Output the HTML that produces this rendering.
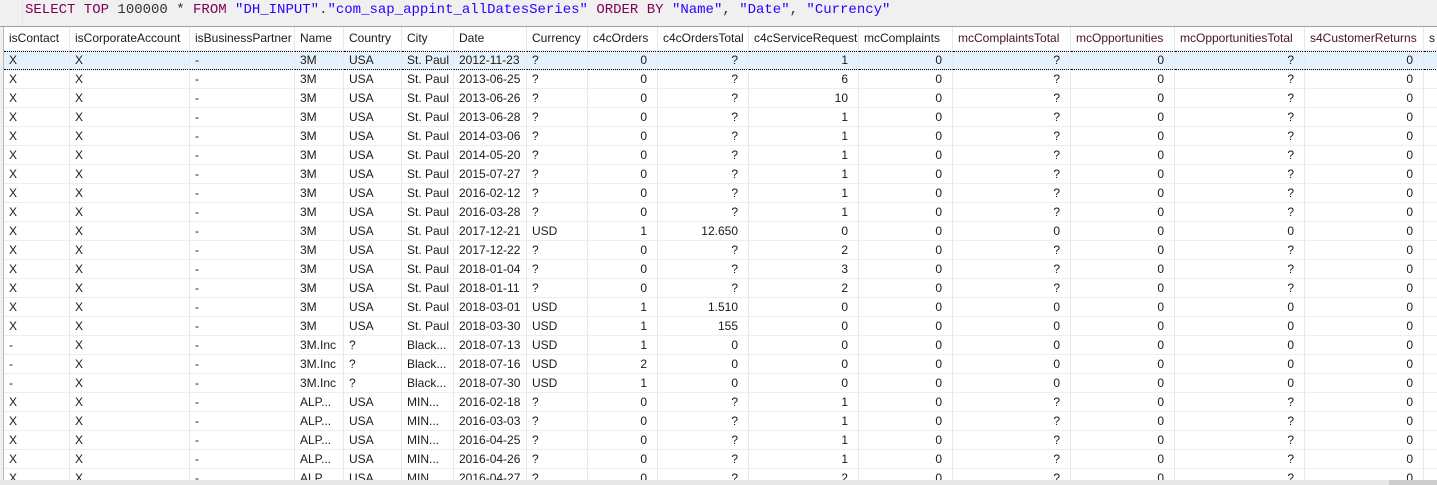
<!DOCTYPE html>
<html><head><meta charset="utf-8"><style>
body{margin:0;width:1437px;height:485px;overflow:hidden;background:#f0f0f0;font-family:"Liberation Sans",sans-serif;}
#sql{position:absolute;left:0;top:0;width:1437px;height:26px;background:#f0f0f0;border-bottom:1px solid #a0a0a0;}
#sql .g{position:absolute;left:22px;top:0;width:1px;height:26px;background:#e4e4e4;}
#sql .t{position:absolute;left:25px;top:2px;font:14px "Liberation Mono",monospace;color:#333;white-space:pre;}
.k{color:#7f0055}.s{color:#2a00ff}
#grid{position:absolute;left:3px;top:27px;width:1433px;height:453px;background:#fff;border-left:1px solid #b8b8b8;overflow:hidden;font-size:12px;color:#1a1a1a;}
.r{display:flex;height:19px;}
.r>div{box-sizing:border-box;height:19px;line-height:18px;padding:0 5px;border-right:1px solid #e6e9ee;border-bottom:1px solid #eceef2;white-space:nowrap;overflow:hidden;flex:none;}
.h,.h>div{height:24px!important;line-height:23px!important}
.m{color:#4a0f2a}
.n{text-align:right;padding-right:10px!important}
.sel>div{background:#e5f1fb;border-top:1px dotted #000;border-bottom:1px dotted #000!important;line-height:16px!important}
.r>div:nth-child(1){width:66px}.r>div:nth-child(2){width:120px}.r>div:nth-child(3){width:105px}.r>div:nth-child(4){width:49px}
.r>div:nth-child(5){width:58px}.r>div:nth-child(6){width:52px}.r>div:nth-child(7){width:73px}.r>div:nth-child(8){width:61px}
.r>div:nth-child(9){width:70px}.r>div:nth-child(10){width:91px}.r>div:nth-child(11){width:110px}.r>div:nth-child(12){width:94px}
.r>div:nth-child(13){width:118px}.r>div:nth-child(14){width:104px}.r>div:nth-child(15){width:130px}.r>div:nth-child(16){width:119px}.r>div:nth-child(17){width:20px}
.r>div:nth-child(n+9):nth-child(-n+16){text-align:right;padding-right:10px}
.h>div:nth-child(n+9){text-align:left!important;padding-right:5px!important}
</style></head><body>
<div id="sql"><div class="g"></div><div class="t"><span class="k">SELECT TOP</span> 100000 * <span class="k">FROM</span> <span class="s">"DH_INPUT"</span>.<span class="s">"com_sap_appint_allDatesSeries"</span> <span class="k">ORDER BY</span> <span class="s">"Name"</span>, <span class="s">"Date"</span>, <span class="s">"Currency"</span></div></div>
<div id="grid">
<div class="r h"><div>isContact</div><div>isCorporateAccount</div><div>isBusinessPartner</div><div>Name</div><div>Country</div><div>City</div><div>Date</div><div>Currency</div><div>c4cOrders</div><div>c4cOrdersTotal</div><div>c4cServiceRequest</div><div>mcComplaints</div><div class="m">mcComplaintsTotal</div><div class="m">mcOpportunities</div><div class="m">mcOpportunitiesTotal</div><div class="m">s4CustomerReturns</div><div>s</div></div>
<div class="r sel"><div>X</div><div>X</div><div>-</div><div>3M</div><div>USA</div><div>St. Paul</div><div>2012-11-23</div><div>?</div><div>0</div><div>?</div><div>1</div><div>0</div><div>?</div><div>0</div><div>?</div><div>0</div><div></div></div>
<div class="r"><div>X</div><div>X</div><div>-</div><div>3M</div><div>USA</div><div>St. Paul</div><div>2013-06-25</div><div>?</div><div>0</div><div>?</div><div>6</div><div>0</div><div>?</div><div>0</div><div>?</div><div>0</div><div></div></div>
<div class="r"><div>X</div><div>X</div><div>-</div><div>3M</div><div>USA</div><div>St. Paul</div><div>2013-06-26</div><div>?</div><div>0</div><div>?</div><div>10</div><div>0</div><div>?</div><div>0</div><div>?</div><div>0</div><div></div></div>
<div class="r"><div>X</div><div>X</div><div>-</div><div>3M</div><div>USA</div><div>St. Paul</div><div>2013-06-28</div><div>?</div><div>0</div><div>?</div><div>1</div><div>0</div><div>?</div><div>0</div><div>?</div><div>0</div><div></div></div>
<div class="r"><div>X</div><div>X</div><div>-</div><div>3M</div><div>USA</div><div>St. Paul</div><div>2014-03-06</div><div>?</div><div>0</div><div>?</div><div>1</div><div>0</div><div>?</div><div>0</div><div>?</div><div>0</div><div></div></div>
<div class="r"><div>X</div><div>X</div><div>-</div><div>3M</div><div>USA</div><div>St. Paul</div><div>2014-05-20</div><div>?</div><div>0</div><div>?</div><div>1</div><div>0</div><div>?</div><div>0</div><div>?</div><div>0</div><div></div></div>
<div class="r"><div>X</div><div>X</div><div>-</div><div>3M</div><div>USA</div><div>St. Paul</div><div>2015-07-27</div><div>?</div><div>0</div><div>?</div><div>1</div><div>0</div><div>?</div><div>0</div><div>?</div><div>0</div><div></div></div>
<div class="r"><div>X</div><div>X</div><div>-</div><div>3M</div><div>USA</div><div>St. Paul</div><div>2016-02-12</div><div>?</div><div>0</div><div>?</div><div>1</div><div>0</div><div>?</div><div>0</div><div>?</div><div>0</div><div></div></div>
<div class="r"><div>X</div><div>X</div><div>-</div><div>3M</div><div>USA</div><div>St. Paul</div><div>2016-03-28</div><div>?</div><div>0</div><div>?</div><div>1</div><div>0</div><div>?</div><div>0</div><div>?</div><div>0</div><div></div></div>
<div class="r"><div>X</div><div>X</div><div>-</div><div>3M</div><div>USA</div><div>St. Paul</div><div>2017-12-21</div><div>USD</div><div>1</div><div>12.650</div><div>0</div><div>0</div><div>0</div><div>0</div><div>0</div><div>0</div><div></div></div>
<div class="r"><div>X</div><div>X</div><div>-</div><div>3M</div><div>USA</div><div>St. Paul</div><div>2017-12-22</div><div>?</div><div>0</div><div>?</div><div>2</div><div>0</div><div>?</div><div>0</div><div>?</div><div>0</div><div></div></div>
<div class="r"><div>X</div><div>X</div><div>-</div><div>3M</div><div>USA</div><div>St. Paul</div><div>2018-01-04</div><div>?</div><div>0</div><div>?</div><div>3</div><div>0</div><div>?</div><div>0</div><div>?</div><div>0</div><div></div></div>
<div class="r"><div>X</div><div>X</div><div>-</div><div>3M</div><div>USA</div><div>St. Paul</div><div>2018-01-11</div><div>?</div><div>0</div><div>?</div><div>2</div><div>0</div><div>?</div><div>0</div><div>?</div><div>0</div><div></div></div>
<div class="r"><div>X</div><div>X</div><div>-</div><div>3M</div><div>USA</div><div>St. Paul</div><div>2018-03-01</div><div>USD</div><div>1</div><div>1.510</div><div>0</div><div>0</div><div>0</div><div>0</div><div>0</div><div>0</div><div></div></div>
<div class="r"><div>X</div><div>X</div><div>-</div><div>3M</div><div>USA</div><div>St. Paul</div><div>2018-03-30</div><div>USD</div><div>1</div><div>155</div><div>0</div><div>0</div><div>0</div><div>0</div><div>0</div><div>0</div><div></div></div>
<div class="r"><div>-</div><div>X</div><div>-</div><div>3M.Inc</div><div>?</div><div>Black...</div><div>2018-07-13</div><div>USD</div><div>1</div><div>0</div><div>0</div><div>0</div><div>0</div><div>0</div><div>0</div><div>0</div><div></div></div>
<div class="r"><div>-</div><div>X</div><div>-</div><div>3M.Inc</div><div>?</div><div>Black...</div><div>2018-07-16</div><div>USD</div><div>2</div><div>0</div><div>0</div><div>0</div><div>0</div><div>0</div><div>0</div><div>0</div><div></div></div>
<div class="r"><div>-</div><div>X</div><div>-</div><div>3M.Inc</div><div>?</div><div>Black...</div><div>2018-07-30</div><div>USD</div><div>1</div><div>0</div><div>0</div><div>0</div><div>0</div><div>0</div><div>0</div><div>0</div><div></div></div>
<div class="r"><div>X</div><div>X</div><div>-</div><div>ALP...</div><div>USA</div><div>MIN...</div><div>2016-02-18</div><div>?</div><div>0</div><div>?</div><div>1</div><div>0</div><div>?</div><div>0</div><div>?</div><div>0</div><div></div></div>
<div class="r"><div>X</div><div>X</div><div>-</div><div>ALP...</div><div>USA</div><div>MIN...</div><div>2016-03-03</div><div>?</div><div>0</div><div>?</div><div>1</div><div>0</div><div>?</div><div>0</div><div>?</div><div>0</div><div></div></div>
<div class="r"><div>X</div><div>X</div><div>-</div><div>ALP...</div><div>USA</div><div>MIN...</div><div>2016-04-25</div><div>?</div><div>0</div><div>?</div><div>1</div><div>0</div><div>?</div><div>0</div><div>?</div><div>0</div><div></div></div>
<div class="r"><div>X</div><div>X</div><div>-</div><div>ALP...</div><div>USA</div><div>MIN...</div><div>2016-04-26</div><div>?</div><div>0</div><div>?</div><div>1</div><div>0</div><div>?</div><div>0</div><div>?</div><div>0</div><div></div></div>
<div class="r"><div>X</div><div>X</div><div>-</div><div>ALP...</div><div>USA</div><div>MIN...</div><div>2016-04-27</div><div>?</div><div>0</div><div>?</div><div>2</div><div>0</div><div>?</div><div>0</div><div>?</div><div>0</div><div></div></div>
</div>
<div style="position:absolute;left:0;top:480px;width:1437px;height:5px;background:#e8e8e8"></div>
<div style="position:absolute;left:1389px;top:480px;width:48px;height:5px;background:#cdcdcd"></div>
</body></html>
